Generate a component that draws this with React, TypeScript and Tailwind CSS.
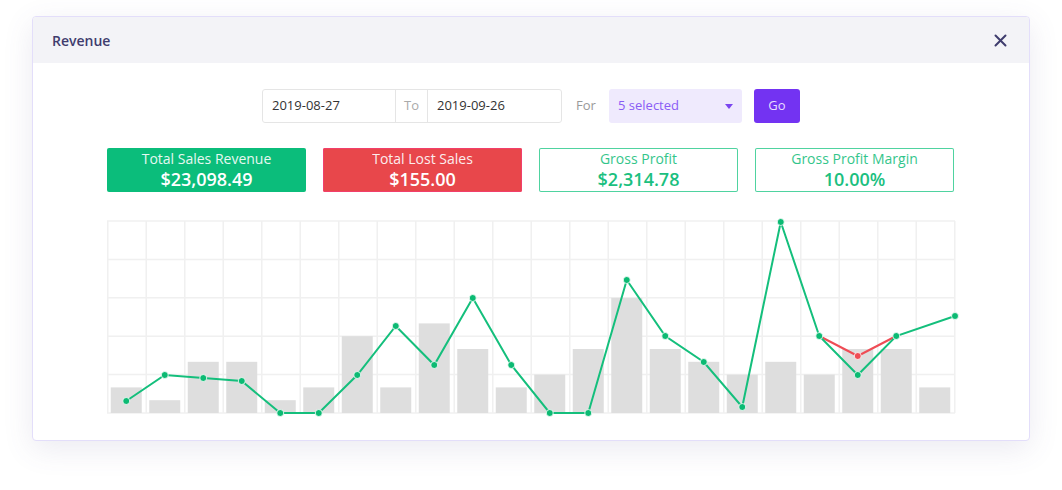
import React from "react";

const bars = [2, 1, 4, 4, 1, 2, 6, 2, 7, 5, 2, 3, 5, 9, 5, 4, 3, 4, 3, 5, 5, 2];
const line = [181, 155, 158, 161, 193, 193, 155, 106, 145, 78, 145, 193, 193, 60, 116, 142, 187, 2, 116, 155, 116, 96];

const COL = 38.5;
const H = 193;

function Chart() {
  const pts = line.map((y, i) => [i === line.length - 1 ? 848 : 19.25 + COL * i, y] as const);
  const red = [
    [19.25 + COL * 18, 116],
    [19.25 + COL * 19, 136],
    [19.25 + COL * 20, 116],
  ];
  return (
    <svg width="848" height="194" viewBox="0 0 848 194" className="block overflow-visible">
      {[0, 1, 2, 3, 4, 5].map((r) => (
        <line key={"h" + r} x1="0" x2="848" y1={1 + r * 38.4} y2={1 + r * 38.4} stroke="#f0f0f0" strokeWidth="1.5" />
      ))}
      {Array.from({ length: 23 }).map((_, c) => (
        <line key={"v" + c} x1={0.75 + c * COL} x2={0.75 + c * COL} y1="1" y2={H} stroke="#f0f0f0" strokeWidth="1.5" />
      ))}
      {bars.map((b, i) => (
        <rect key={"b" + i} x={i * COL + 3.75} y={H - b * 12.8} width="31" height={b * 12.8} fill="#dedede" />
      ))}
      <polyline points={red.map((p) => p.join(",")).join(" ")} fill="none" stroke="#ef4c55" strokeWidth="2" />
      <polyline points={pts.map((p) => p.join(",")).join(" ")} fill="none" stroke="#14bf7c" strokeWidth="2" />
      <circle cx={red[1][0]} cy={red[1][1]} r="3.5" fill="#ef4c55" stroke="#fff" strokeWidth="0.8" />
      {pts.map((p, i) => (
        <circle key={"p" + i} cx={p[0]} cy={p[1]} r="3.5" fill="#0cba73" stroke="#fff" strokeWidth="0.8" />
      ))}
    </svg>
  );
}

function Stat({ label, value, kind }: { label: string; value: string; kind: "green" | "red" | "outline" }) {
  const cls =
    kind === "green"
      ? "bg-[#0bbd7b] text-white"
      : kind === "red"
      ? "bg-[#e8474b] shadow-[inset_0_0_0_1px_#f23f6b] text-white"
      : "bg-white shadow-[inset_0_0_0_1px_#4fd3a0] text-[#1bbf80]";
  return (
    <div className={`w-[199px] h-[44px] rounded-[2px] flex flex-col items-center justify-center leading-none ${cls}`}>
      <span className="text-[14px] opacity-90 mb-[4px]">{label}</span>
      <span className="text-[18px] font-semibold">{value}</span>
    </div>
  );
}

export default function App() {
  return (
    <div className="w-[1062px] h-[490px] bg-white pt-4 pl-8 font-['Open_Sans',sans-serif]">
      <div className="w-[998px] h-[425px] bg-white border border-[#e3defa] rounded-[4px] shadow-[0_8px_30px_rgba(90,80,140,0.12)] overflow-hidden">
        <div className="h-[46px] bg-[#f3f3f7] flex items-center justify-between pl-[19px] pr-[22px]">
          <span className="text-[14px] font-semibold text-[#3f3c6e]">Revenue</span>
          <svg width="13" height="13" viewBox="0 0 13 13" className="text-[#3f3c6e]">
            <path d="M1.5 1.5 L11.5 11.5 M11.5 1.5 L1.5 11.5" stroke="currentColor" strokeWidth="2" strokeLinecap="round" />
          </svg>
        </div>
        <div className="w-[848px] mx-auto flex flex-col pt-[26px]">
          <div className="flex items-center h-[34px] text-[13px] ml-[155px]">
            <div className="flex h-full border border-[#e5e5e5] rounded-[3px] bg-white">
              <div className="w-[132px] flex items-center pl-[9px] text-[#333]">2019-08-27</div>
              <div className="w-[33px] flex items-center justify-center border-l border-r border-[#e5e5e5] text-[#aaa]">To</div>
              <div className="w-[133px] flex items-center pl-[9px] text-[#333]">2019-09-26</div>
            </div>
            <span className="w-[19px] ml-[14px] mr-[14px] text-[#999]">For</span>
            <div className="w-[133px] h-full bg-[#efeafd] rounded-[3px] flex items-center justify-between pl-[9px] pr-[9px] text-[#8a5cf5]">
              <span>5 selected</span>
              <svg width="8" height="5" viewBox="0 0 8 5"><path d="M0 0 H8 L4 5 Z" fill="#7a45ef" /></svg>
            </div>
            <div className="ml-[12px] w-[46px] h-full bg-[#7333f2] rounded-[3px] flex items-center justify-center text-[#e7defe]">Go</div>
          </div>
          <div className="flex gap-[17px] mt-[25px]">
            <Stat label="Total Sales Revenue" value="$23,098.49" kind="green" />
            <Stat label="Total Lost Sales" value="$155.00" kind="red" />
            <Stat label="Gross Profit" value="$2,314.78" kind="outline" />
            <Stat label="Gross Profit Margin" value="10.00%" kind="outline" />
          </div>
          <div className="mt-[28px]">
            <Chart />
          </div>
        </div>
      </div>
    </div>
  );
}
